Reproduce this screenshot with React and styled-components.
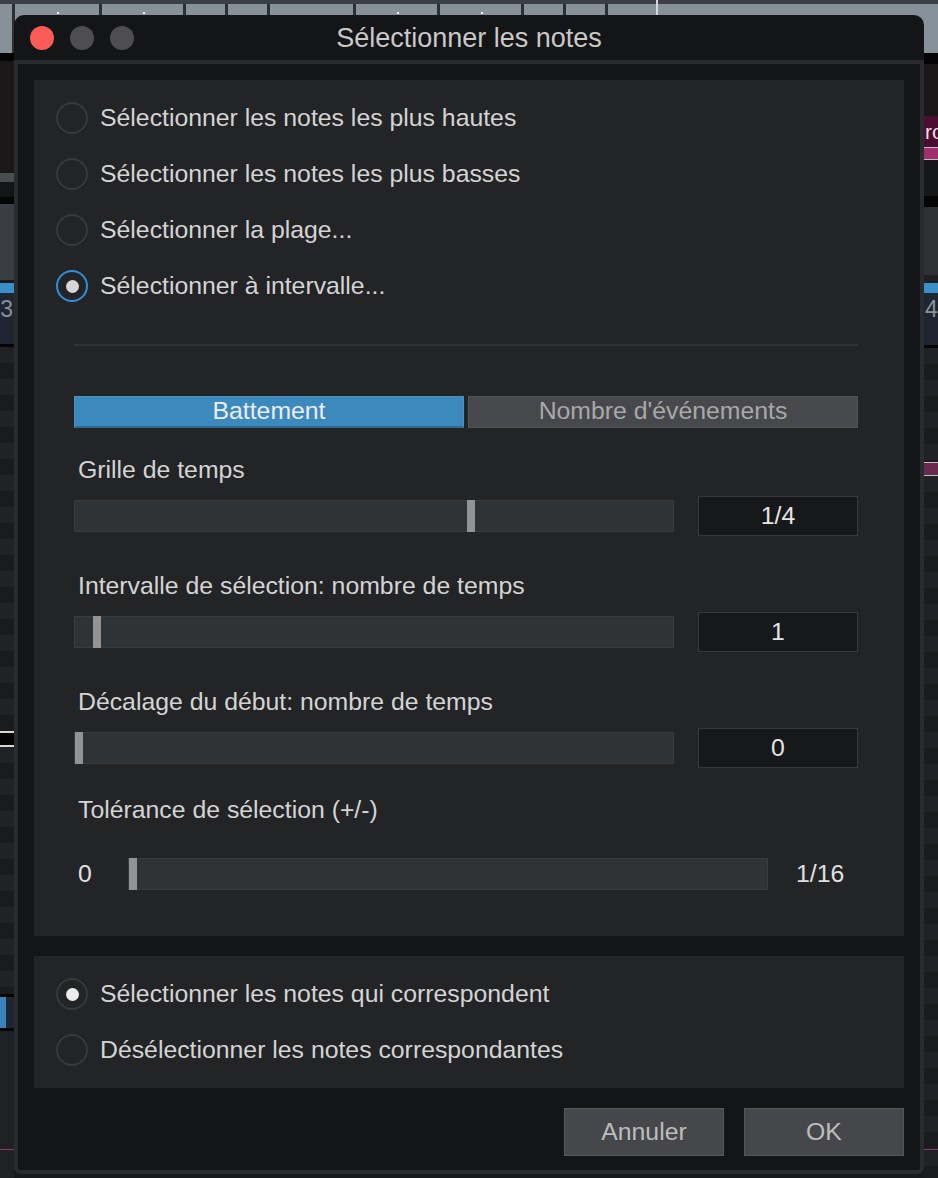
import React from "react";
import styled, { createGlobalStyle, css } from "styled-components";

const FONT = `"Liberation Sans", Arial, Helvetica, sans-serif`;

const GlobalStyle = createGlobalStyle`
  *, *::before, *::after { box-sizing: border-box; }
  html, body { margin: 0; padding: 0; background: #141517; }
  body { font-family: ${FONT}; }
`;

/* ---------- host application peeking out behind the dialog ---------- */

const Desktop = styled.div`
  position: relative;
  width: 938px;
  height: 1178px;
  overflow: hidden;
  background: #18191b;
`;

const Backdrop = styled.div`
  display: grid;
  grid-template-columns: 14px 1fr 14px;
  grid-template-rows: 57px 1fr;
  height: 100%;
`;

const Ruler = styled.div`
  grid-column: 1 / -1;
  position: relative;
  display: flex;
  flex-direction: column;
  background: #050505;
`;

const RulerHead = styled.div`
  height: 4px;
  background: #3b4047;
`;

const RulerCells = styled.div`
  display: flex;
  height: 49px;
`;

const RulerCell = styled.div`
  position: relative;
  flex: ${(p) => (p.$w ? `0 0 ${p.$w}px` : "1 1 auto")};
  background: #87919a;
  border-right: ${(p) => (p.$w ? "3px solid #2b2f34" : "none")};
  ${(p) =>
    p.$tick &&
    css`
      &::after {
        content: "";
        position: absolute;
        left: 50%;
        top: 8px;
        width: 2px;
        height: 2px;
        background: #f2f2f2;
      }
    `}
`;

const Playhead = styled.div`
  position: absolute;
  left: 656px;
  top: 0;
  bottom: 0;
  width: 2px;
  background: #d6d6d6;
`;

const Lane = styled.div`
  display: flex;
  flex-direction: column;
  overflow: hidden;
`;

const LaneBand = styled.div`
  flex: 0 0 ${(p) => p.$h}px;
  display: flex;
  justify-content: ${(p) => (p.$end ? "flex-end" : "flex-start")};
  background: ${(p) =>
    p.$striped
      ? "repeating-linear-gradient(180deg, #212225 0 16px, #1a1b1d 16px 32px)"
      : p.$bg};
  color: ${(p) => p.$ink || "#8b919a"};
  font-size: ${(p) => p.$fs || 23}px;
  line-height: ${(p) => p.$fs || 23}px;
  padding: ${(p) => p.$pt || 0}px ${(p) => (p.$end ? 1 : 0)}px 0
    ${(p) => (p.$end ? 0 : 1)}px;
  white-space: nowrap;
  overflow: hidden;
`;

const Stage = styled.div`
  background: #18191b;
`;

const rulerCells = [
  { w: 15 },
  { w: 87, tick: true },
  { w: 84, tick: true },
  { w: 42 },
  { w: 42 },
  { w: 86 },
  { w: 84, tick: true },
  { w: 84, tick: true },
  { w: 42 },
  { w: 42 },
  {},
];

const leftLane = [
  { h: 4, bg: "#050505" },
  { h: 112, bg: "#1b1618" },
  { h: 9, bg: "#4b4c4e" },
  { h: 15, bg: "#141516" },
  { h: 7, bg: "#050505" },
  { h: 76, bg: "#3a3d43" },
  { h: 3, bg: "#1a1b1d" },
  { h: 10, bg: "#3b8fc8" },
  { h: 51, bg: "#1f2531", text: "3", end: true, pt: 5 },
  { h: 3, bg: "#050505" },
  { h: 384, striped: true },
  { h: 2, bg: "#d8d8d8" },
  { h: 12, bg: "#050505" },
  { h: 2, bg: "#d8d8d8" },
  { h: 247, striped: true },
  { h: 3, bg: "#050505" },
  { h: 31, bg: "linear-gradient(90deg, #3a84bb 0 6px, #1f2531 6px)" },
  { h: 3, bg: "#050505" },
  { h: 118, bg: "#1f2124" },
  { h: 1, bg: "#8a3a6a" },
  { h: 28, bg: "#1f2124" },
];

const rightLane = [
  { h: 7, bg: "#050505" },
  { h: 52, bg: "#1b1718" },
  { h: 31, bg: "#4b0e30", text: "ro", ink: "#eadde4", fs: 21, pt: 5 },
  { h: 1, bg: "#b8c0c8" },
  { h: 11, bg: "#a22e6e" },
  { h: 1, bg: "#b8c0c8" },
  { h: 36, bg: "#161719" },
  { h: 11, bg: "#050505" },
  { h: 68, bg: "#2e3034" },
  { h: 8, bg: "#1e1f21" },
  { h: 10, bg: "#3b8fc8" },
  { h: 52, bg: "#1f2531", text: "4", pt: 5 },
  { h: 3, bg: "#050505" },
  { h: 114, striped: true },
  { h: 1, bg: "#b8c0c8" },
  { h: 12, bg: "#6a2a50" },
  { h: 1, bg: "#b8c0c8" },
  { h: 673, striped: true },
  { h: 1, bg: "#8a3a6a" },
  { h: 28, striped: true },
];

const renderLane = (bands) =>
  bands.map((b, i) => (
    <LaneBand
      key={i}
      $h={b.h}
      $bg={b.bg}
      $striped={b.striped}
      $end={b.end}
      $ink={b.ink}
      $fs={b.fs}
      $pt={b.pt}
    >
      {b.text}
    </LaneBand>
  ));

/* ---------- dialog window ---------- */

const Window = styled.section`
  position: absolute;
  left: 14px;
  top: 15px;
  width: 910px;
  height: 1159px;
  display: flex;
  flex-direction: column;
  background: #141517;
  border-radius: 10px 10px 6px 6px;
  overflow: hidden;
  color: #d4d4d4;
  font-family: ${FONT};
  font-size: 24.8px;
  line-height: 30px;
`;

const TitleBar = styled.header`
  flex: 0 0 45px;
  display: grid;
  grid-template-columns: 1fr auto 1fr;
  align-items: center;
  padding: 0 16px;
`;

const Lights = styled.div`
  display: flex;
  gap: 16px;
`;

const Light = styled.span`
  width: 24px;
  height: 24px;
  border-radius: 50%;
  background: ${(p) => p.$color};
`;

const Title = styled.h1`
  margin: 0;
  font-size: 27px;
  font-weight: 400;
  line-height: 30px;
  color: #c9c9c9;
`;

const Body = styled.div`
  flex: 1;
  display: flex;
  flex-direction: column;
  gap: 20px;
  padding: 16px 16px 14px;
  border: 4px solid #2a2b2e;
  border-radius: 0 0 6px 6px;
`;

const Panel = styled.div`
  background: #232426;
  padding: ${(p) => p.$pad};
`;

const RadioGroup = styled.div`
  display: flex;
  flex-direction: column;
  padding-left: 22px;
`;

const RadioRow = styled.label`
  display: flex;
  align-items: center;
  gap: 12px;
  height: 56px;
`;

const RadioMark = styled.span`
  flex: none;
  width: 32px;
  height: 32px;
  border-radius: 50%;
  border: 2px solid ${(p) => (p.$accent ? "#2f8fdc" : "#38393c")};
  display: grid;
  place-items: center;

  &::after {
    content: "";
    display: ${(p) => (p.$checked ? "block" : "none")};
    width: 13px;
    height: 13px;
    border-radius: 50%;
    background: ${(p) => (p.$accent ? "#d6d6d6" : "#ececec")};
  }
`;

const Settings = styled.div`
  margin-top: 30px;
  padding: 0 46px 0 40px;
`;

const Divider = styled.hr`
  margin: 0 0 50px;
  border: 0;
  height: 2px;
  background: #323335;
`;

const Tabs = styled.div`
  display: grid;
  grid-template-columns: 1fr 1fr;
  gap: 4px;
`;

const Tab = styled.div`
  height: 32px;
  line-height: 28px;
  text-align: center;
  ${(p) =>
    p.$active
      ? css`
          background: #3c89be;
          border: 1px solid #4892c5;
          border-bottom: 2px solid #2f6a93;
          color: #ececec;
        `
      : css`
          background: #47484b;
          border: 1px solid #525357;
          color: #a8a8a8;
        `}
`;

const Field = styled.div`
  margin-top: ${(p) => p.$top}px;
`;

const FieldLabel = styled.div`
  height: 30px;
  padding-left: 4px;
`;

const FieldRow = styled.div`
  margin-top: ${(p) => p.$gap || 11}px;
  height: 40px;
  display: flex;
  align-items: center;
  gap: ${(p) => (p.$range ? 0 : 24)}px;
`;

const Track = styled.div`
  position: relative;
  flex: 0 0 ${(p) => p.$w}px;
  height: 32px;
  background: #303336;
  border: 1px solid #393c3f;
`;

const Thumb = styled.span`
  position: absolute;
  top: -1px;
  bottom: -1px;
  width: 8px;
  background: #939393;
`;

const ValueBox = styled.div`
  flex: 0 0 160px;
  height: 40px;
  display: grid;
  place-items: center;
  background: #17181a;
  border: 1px solid #38393c;
  color: #e4e4e4;
`;

const RangeEnd = styled.span`
  flex: 0 0 ${(p) => p.$w}px;
  padding-left: ${(p) => p.$pl}px;
  color: #e0e0e0;
`;

const Footer = styled.div`
  display: flex;
  justify-content: flex-end;
  gap: 20px;
`;

const Button = styled.button`
  width: 160px;
  height: 48px;
  background: #46474a;
  border: 1px solid #55565a;
  color: #bdbdbd;
  font: inherit;
  line-height: 44px;
  padding: 0;
`;

const Slider = ({ width, frac }) => (
  <Track $w={width}>
    <Thumb style={{ left: `calc(${frac} * (100% - 10px))` }} />
  </Track>
);

const Radio = ({ label, checked, accent }) => (
  <RadioRow>
    <RadioMark $checked={checked} $accent={accent} />
    {label}
  </RadioRow>
);

const modes = [
  { label: "Sélectionner les notes les plus hautes" },
  { label: "Sélectionner les notes les plus basses" },
  { label: "Sélectionner la plage..." },
  { label: "Sélectionner à intervalle...", checked: true, accent: true },
];

const fields = [
  { label: "Grille de temps", value: "1/4", frac: 2 / 3, top: 27 },
  { label: "Intervalle de sélection: nombre de temps", value: "1", frac: 1 / 32, top: 35 },
  { label: "Décalage du début: nombre de temps", value: "0", frac: 0, top: 35 },
];

export default function App() {
  return (
    <>
      <GlobalStyle />
      <Desktop>
        <Backdrop>
          <Ruler>
            <RulerHead />
            <RulerCells>
              {rulerCells.map((c, i) => (
                <RulerCell key={i} $w={c.w} $tick={c.tick} />
              ))}
            </RulerCells>
            <Playhead />
          </Ruler>
          <Lane>{renderLane(leftLane)}</Lane>
          <Stage />
          <Lane>{renderLane(rightLane)}</Lane>
        </Backdrop>

        <Window>
          <TitleBar>
            <Lights>
              <Light $color="#fc5a55" />
              <Light $color="#4e4e50" />
              <Light $color="#4e4e50" />
            </Lights>
            <Title>Sélectionner les notes</Title>
            <span />
          </TitleBar>

          <Body>
            <Panel $pad="10px 0 42px">
              <RadioGroup>
                {modes.map((m) => (
                  <Radio key={m.label} {...m} />
                ))}
              </RadioGroup>

              <Settings>
                <Divider />
                <Tabs>
                  <Tab $active>Battement</Tab>
                  <Tab>Nombre d'événements</Tab>
                </Tabs>

                {fields.map((f) => (
                  <Field key={f.label} $top={f.top}>
                    <FieldLabel>{f.label}</FieldLabel>
                    <FieldRow>
                      <Slider width={600} frac={f.frac} />
                      <ValueBox>{f.value}</ValueBox>
                    </FieldRow>
                  </Field>
                ))}

                <Field $top={27}>
                  <FieldLabel>Tolérance de sélection (+/-)</FieldLabel>
                  <FieldRow $gap={29} $range>
                    <RangeEnd $w={54} $pl={4}>0</RangeEnd>
                    <Slider width={640} frac={0} />
                    <RangeEnd $w={90} $pl={28}>1/16</RangeEnd>
                  </FieldRow>
                </Field>
              </Settings>
            </Panel>

            <Panel $pad="10px 0">
              <RadioGroup>
                <Radio label="Sélectionner les notes qui correspondent" checked />
                <Radio label="Désélectionner les notes correspondantes" />
              </RadioGroup>
            </Panel>

            <Footer>
              <Button>Annuler</Button>
              <Button>OK</Button>
            </Footer>
          </Body>
        </Window>
      </Desktop>
    </>
  );
}
